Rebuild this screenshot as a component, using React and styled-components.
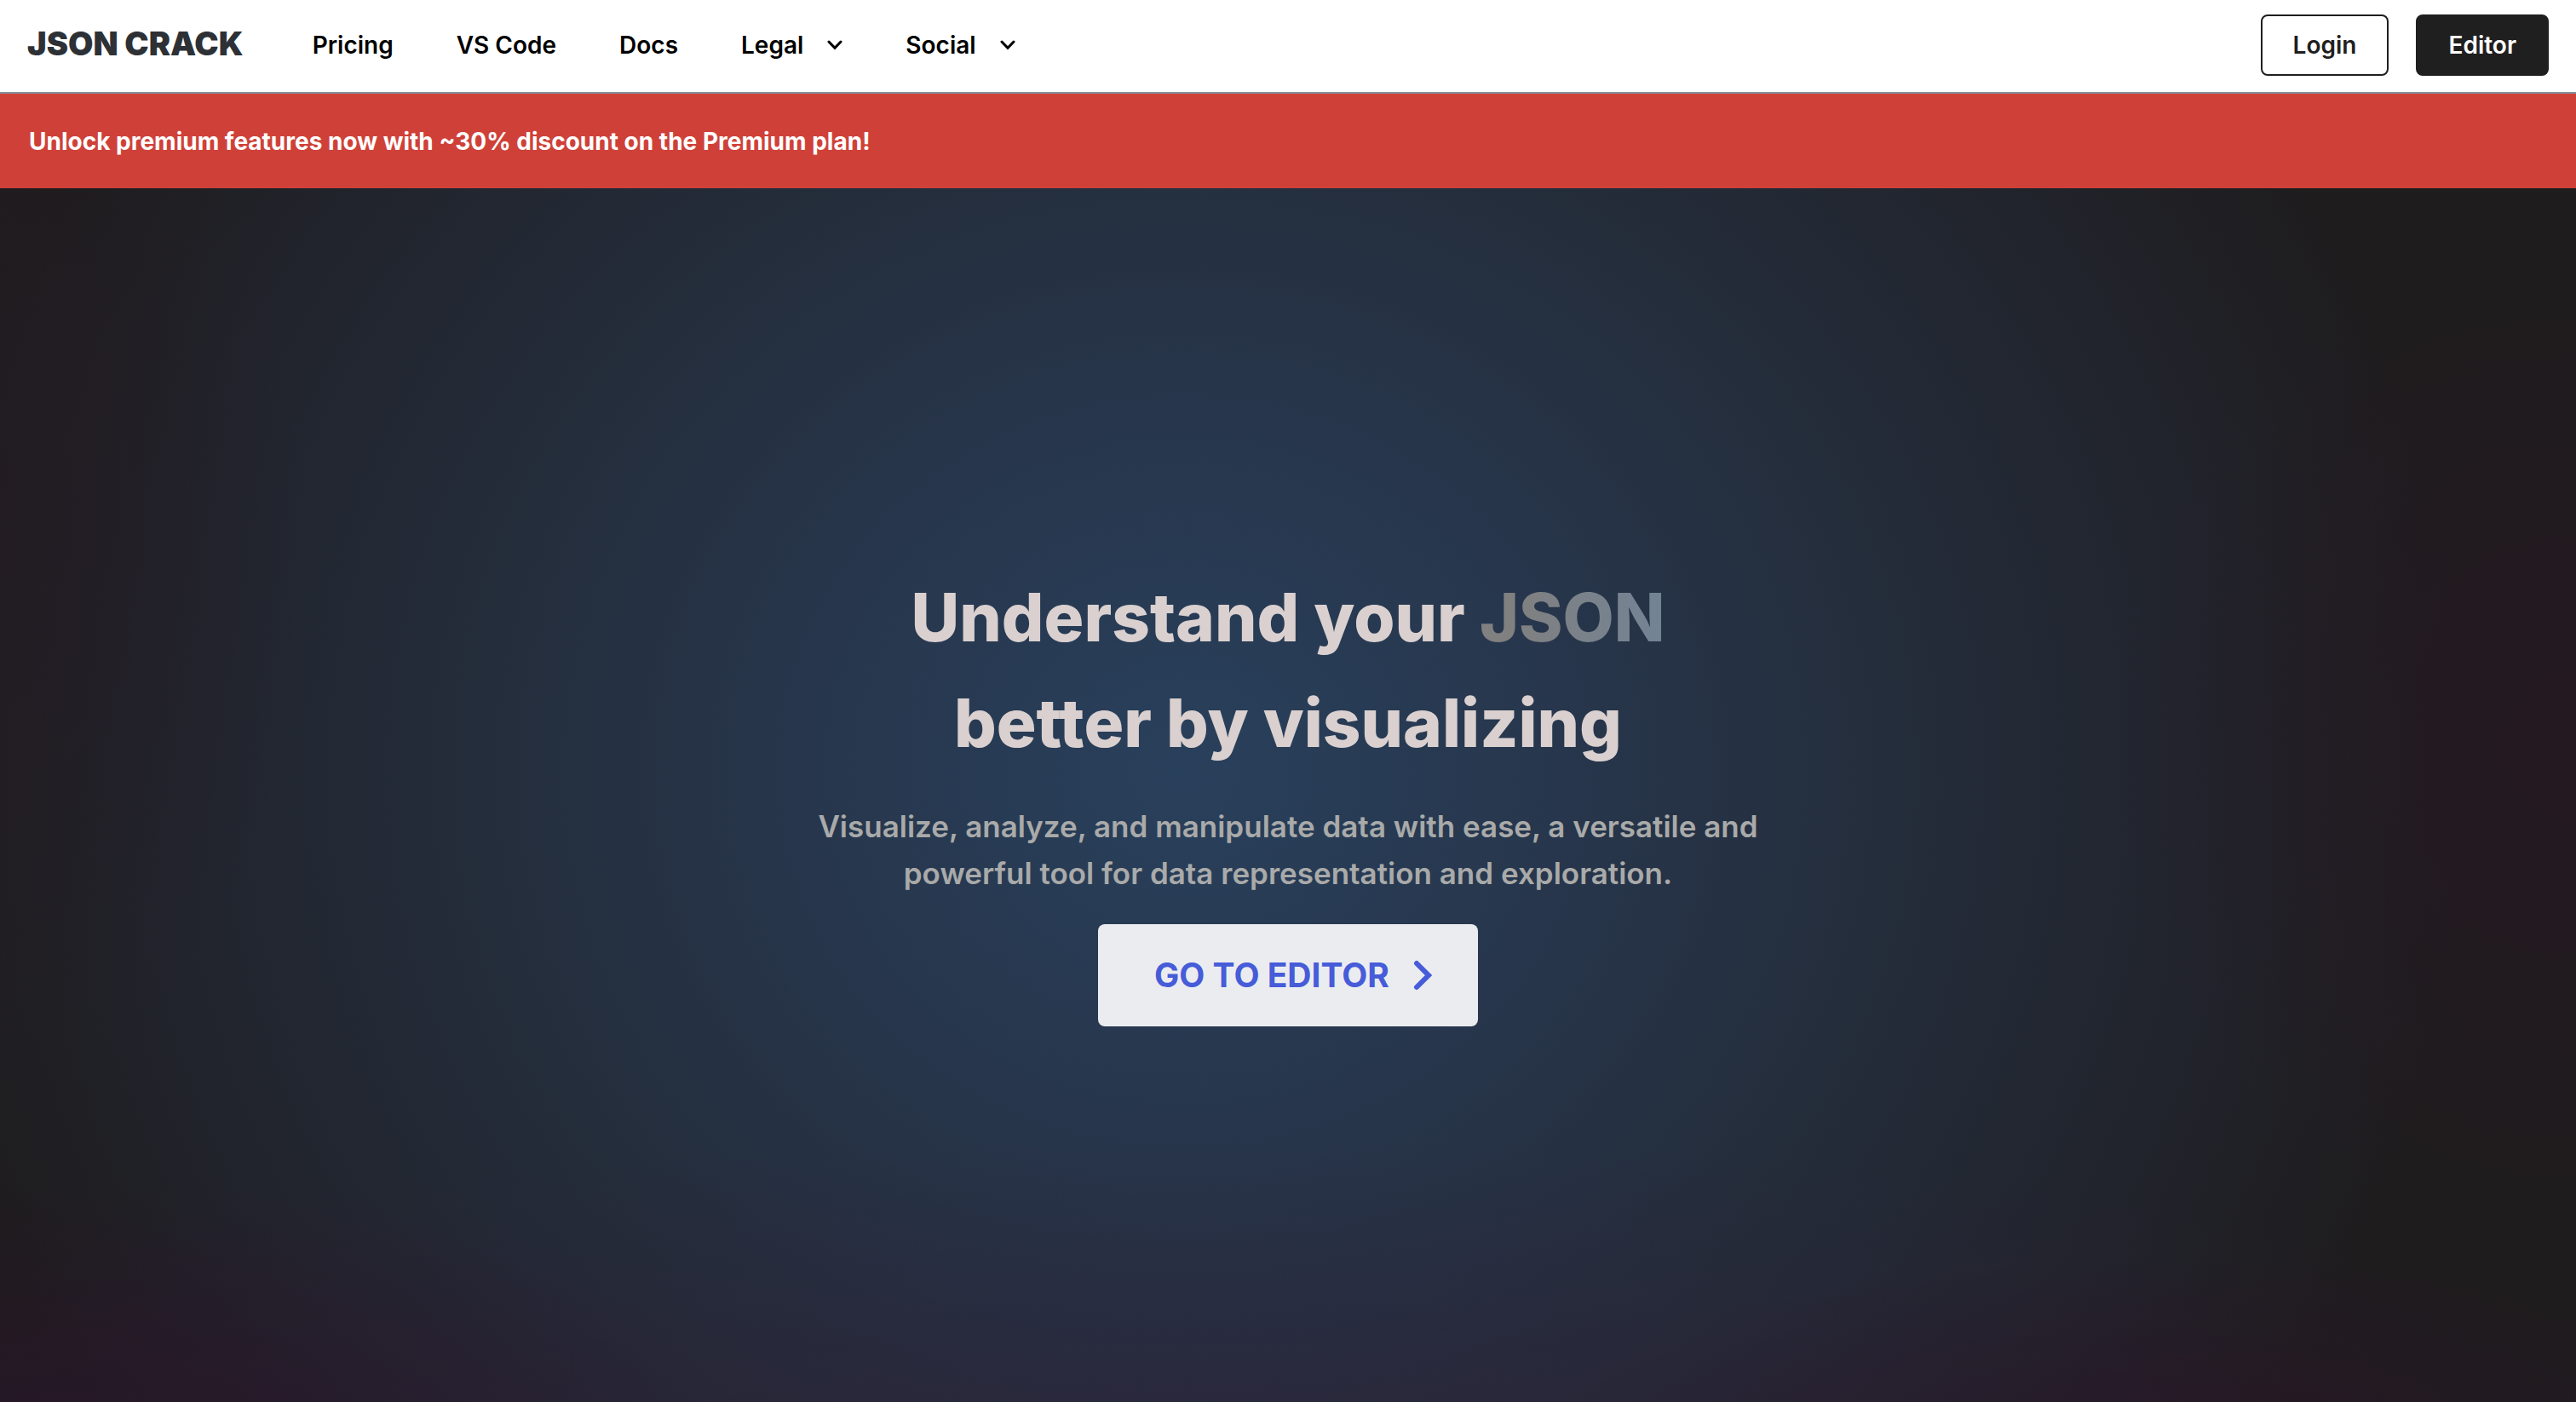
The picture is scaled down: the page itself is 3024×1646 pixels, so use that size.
import React from "react";
import styled, { createGlobalStyle } from "styled-components";

const GlobalStyle = createGlobalStyle`
  *, *::before, *::after { box-sizing: border-box; }
  html, body, #root { height: 100%; }
  body {
    margin: 0;
    background: #1d1c1c;
    font-family: Inter, "Liberation Sans", sans-serif;
    -webkit-font-smoothing: antialiased;
  }
  button { font-family: inherit; cursor: pointer; }
`;

const Page = styled.div`
  display: flex;
  flex-direction: column;
  min-height: 100%;
`;

const Header = styled.header`
  display: flex;
  align-items: center;
  justify-content: space-between;
  height: 110px;
  padding: 0 32px 2px;
  background: #ffffff;
  border-bottom: 2px solid #868e96;
`;

const HeaderGroup = styled.div`
  display: flex;
  align-items: center;
  gap: 32px;
`;

const Logo = styled.a`
  margin-right: 12px;
  padding-bottom: 4px;
  color: #2d3136;
  font-size: 38px;
  font-weight: 900;
  line-height: 48px;
  text-decoration: none;
`;

const Nav = styled.nav`
  display: flex;
  align-items: center;
`;

const navItem = `
  display: flex;
  align-items: center;
  gap: 28px;
  height: 72px;
  padding: 0 37px;
  border: 0;
  background: none;
  color: #000000;
  font-size: 28px;
  font-weight: 600;
  text-decoration: none;
`;

const NavLink = styled.a`${navItem}`;
const NavMenu = styled.button`${navItem}`;

const HeaderButton = styled.button`
  height: 72px;
  padding: 0 36px;
  border: 2px solid #1f1f1f;
  border-radius: 8px;
  background: ${(p) => (p.$filled ? "#1f1f1f" : "#ffffff")};
  color: ${(p) => (p.$filled ? "#ffffff" : "#1f1f1f")};
  font-size: 28px;
  font-weight: 600;
`;

const Banner = styled.aside`
  display: flex;
  align-items: center;
  height: 111px;
  padding: 0 34px;
  background: #cf4138;
  color: #ffffff;
  font-size: 28px;
  font-weight: 700;
`;

const Hero = styled.main`
  flex: 1;
  display: flex;
  flex-direction: column;
  align-items: center;
  justify-content: center;
  padding: 64px;
  text-align: center;
  background:
    radial-gradient(ellipse 26% 22% at 3% 104%, rgba(42, 20, 42, 0.7), transparent),
    radial-gradient(ellipse 24% 16% at 84% 104%, rgba(42, 20, 38, 0.6), transparent),
    radial-gradient(ellipse 60% 26% at 46% 104%, rgba(48, 34, 60, 0.5), transparent),
    radial-gradient(ellipse 18% 40% at 100% 46%, rgba(38, 24, 34, 0.8), transparent),
    radial-gradient(ellipse 12% 44% at 0% 30%, rgba(36, 27, 35, 0.7), transparent),
    radial-gradient(ellipse 50% 98% at 46% 48%, #29405c 0%, #27364c 30%, #242d3b 55%, #21232b 82%, #1e1c1d 100%);
`;

const Title = styled.h1`
  margin: 0;
  color: #d9d0cf;
  font-size: 78px;
  font-weight: 800;
  line-height: 124px;
`;

const Accent = styled.span`
  background: linear-gradient(90deg, #808080 20%, #748393 90%);
  background-clip: text;
  color: transparent;
`;

const Lead = styled.p`
  margin: 32px 0;
  color: #a9aaa9;
  font-size: 35px;
  font-weight: 600;
  line-height: 55px;
`;

const EditorButton = styled.button`
  display: flex;
  align-items: center;
  gap: 28px;
  height: 120px;
  padding: 0 54px 0 66px;
  border: 0;
  border-radius: 8px;
  background: #ebecf0;
  color: #465cd8;
  font-size: 39px;
  font-weight: 700;
`;

const ChevronDown = () => (
  <svg width="18" height="12" viewBox="0 0 18 12" fill="none" aria-hidden="true">
    <path d="M2 2l7 7.400l7-7.400" stroke="#000" strokeWidth="3" strokeLinecap="round" />
  </svg>
);

const ChevronRight = () => (
  <svg width="22" height="36" viewBox="0 0 22 36" fill="none" aria-hidden="true">
    <path d="M4 4l14 14l-14 14" stroke="currentColor" strokeWidth="6" strokeLinecap="round" />
  </svg>
);

const links = ["Pricing", "VS Code", "Docs"];
const menus = ["Legal", "Social"];

export default function App() {
  return (
    <>
      <GlobalStyle />
      <Page>
        <Header>
          <HeaderGroup>
            <Logo href="#">JSON CRACK</Logo>
            <Nav>
              {links.map((label) => (
                <NavLink key={label} href="#">{label}</NavLink>
              ))}
              {menus.map((label) => (
                <NavMenu key={label} type="button">
                  {label}
                  <ChevronDown />
                </NavMenu>
              ))}
            </Nav>
          </HeaderGroup>
          <HeaderGroup>
            <HeaderButton type="button">Login</HeaderButton>
            <HeaderButton type="button" $filled>Editor</HeaderButton>
          </HeaderGroup>
        </Header>
        <Banner>Unlock premium features now with ~30% discount on the Premium plan!</Banner>
        <Hero>
          <Title>
            Understand your <Accent>JSON</Accent>
            <br />
            better by visualizing
          </Title>
          <Lead>
            Visualize, analyze, and manipulate data with ease, a versatile and
            <br />
            powerful tool for data representation and exploration.
          </Lead>
          <EditorButton type="button">
            GO TO EDITOR
            <ChevronRight />
          </EditorButton>
        </Hero>
      </Page>
    </>
  );
}
